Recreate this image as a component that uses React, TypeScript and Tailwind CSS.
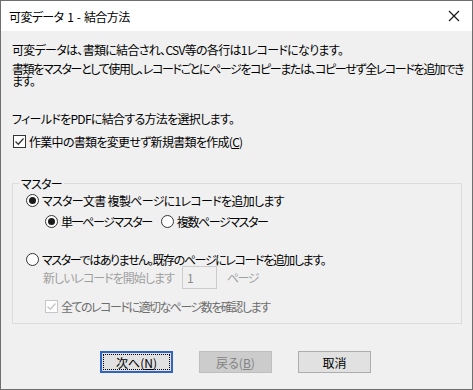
import React from "react";

const F = { fontFamily: '"Noto Sans CJK JP", "Noto Sans", sans-serif' } as React.CSSProperties;

function Radio({ checked, x }: { checked?: boolean; x?: string }) {
  return (
    <span className={`inline-flex h-[13px] w-[13px] shrink-0 items-center justify-center rounded-full border border-[#333] bg-white ${x ?? ""}`}>
      {checked && <span className="h-[7px] w-[7px] rounded-full bg-[#1a1a1a]" />}
    </span>
  );
}

function Check({ disabled }: { disabled?: boolean }) {
  const c = disabled ? "#c5c5c5" : "#333";
  return (
    <span
      className={`inline-flex h-[13px] w-[13px] shrink-0 items-center justify-center border bg-white ${disabled ? "border-[#c5c5c5]" : "border-[#333]"}`}
    >
      <svg width="11" height="11" viewBox="0 0 11 11">
        <path d="M1.5 5.5 L4.3 8.3 L9.5 2.5" fill="none" stroke={c} strokeWidth="1.3" />
      </svg>
    </span>
  );
}

export default function App() {
  return (
    <div
      className="flex h-[390px] w-[473px] flex-col border border-[#6e6e6e] bg-[#f0f0f0] text-[12px] leading-[13px] tracking-[-0.7px] text-black [font-feature-settings:'palt']"
      style={F}
    >
      {/* title bar */}
      <div className="flex h-[30px] shrink-0 items-center justify-between bg-white pl-[8px] pr-[12px]">
        <span className="text-[12px] tracking-[-0.6px] [word-spacing:1.5px]">可変データ 1 - 結合方法</span>
        <svg width="12" height="12" viewBox="0 0 12 12">
          <path d="M1 1 L11 11 M11 1 L1 11" stroke="#111" strokeWidth="1.1" />
        </svg>
      </div>

      <div className="flex flex-1 flex-col pl-[11px] pt-[12px]">
        <p className="whitespace-nowrap">可変データは、書類に結合され、CSV等の各行は1レコードになります。</p>
        <p className="mt-[7px] whitespace-nowrap leading-[12px] tracking-[-1.4px]">
          書類をマスターとして使用し、レコードごとにページをコピーまたは、コピーせず全レコードを追加でき
          <br />
          ます。
        </p>
        <p className="mt-[25px] whitespace-nowrap">フィールドをPDFに結合する方法を選択します。</p>
        <div className="mt-[10px] flex items-center gap-[3px] pl-[1px]">
          <Check />
          <span>
            作業中の書類を変更せず新規書類を作成(<span className="underline">C</span>)
          </span>
        </div>

        <fieldset className="mt-[29px] mr-[10px] h-[147px] border border-[#dcdcdc] pl-[13px]">
          <legend className="ml-[-7px] px-[2px]">マスター</legend>
          <div className="mt-[4px] flex items-center gap-[3px]">
            <Radio checked />
            <span>マスター文書 複製ページに1レコードを追加します</span>
          </div>
          <div className="mt-[8px] flex items-center pl-[19px] tracking-[-1.4px]">
            <Radio checked />
            <span className="ml-[3px]">単一ページマスター</span>
            <Radio x="ml-[9px]" />
            <span className="ml-[3px]">複数ページマスター</span>
          </div>
          <div className="mt-[25px] flex items-center gap-[3px] tracking-[-1.4px]">
            <Radio />
            <span>マスターではありません。既存のページにレコードを追加します。</span>
          </div>
          <div className="mt-[0px] flex items-center pl-[17px] text-[#a0a0a0]">
            <span className="tracking-[-1px]">新しいレコードを開始します</span>
            <span className="ml-[8px] flex h-[23px] w-[35px] items-center border border-[#cccccc] bg-[#f0f0f0] pl-[4px] text-[#8a8a8a]">
              1
            </span>
            <span className="ml-[10px] tracking-[-1.5px]">ページ</span>
          </div>
          <div className="mt-[11px] flex items-center gap-[3px] pl-[19px] text-[#6d6d6d] tracking-[-1.5px]">
            <Check disabled />
            <span>全てのレコードに適切なページ数を確認します</span>
          </div>
        </fieldset>

        <div className="mt-[27px] flex gap-[26px] pl-[88px] tracking-normal">
          <button className="flex h-[22px] w-[73px] items-center justify-center border-2 border-[#2f63c4] bg-[#e1e1e1] outline outline-1 -outline-offset-[4px] outline-dotted outline-black">
            次へ(<span className="underline">N</span>)
          </button>
          <button className="flex h-[22px] w-[73px] items-center justify-center border border-[#bfbfbf] bg-[#cccccc] text-[#838383]">
            戻る(<span className="underline">B</span>)
          </button>
          <button className="flex h-[22px] w-[73px] items-center justify-center border border-[#adadad] bg-[#e1e1e1]">
            取消
          </button>
        </div>
      </div>
    </div>
  );
}
